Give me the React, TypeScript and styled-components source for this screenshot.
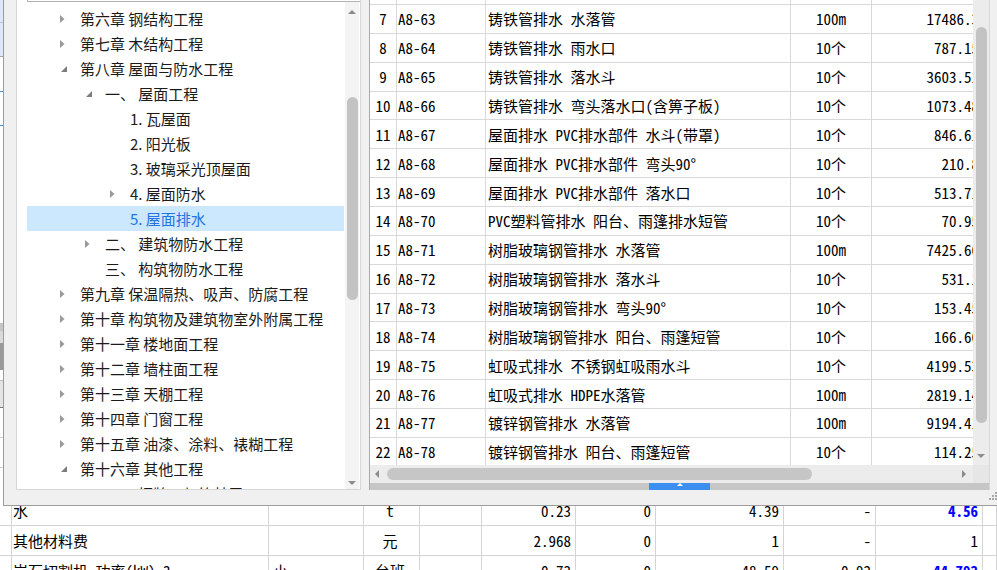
import styled, { createGlobalStyle } from 'styled-components';

const MONO = `"Noto Sans Mono CJK SC", "Noto Sans CJK SC", "Liberation Mono", monospace`;
const SANS = `"Noto Sans CJK SC", "Noto Sans", sans-serif`;

const GlobalStyle = createGlobalStyle`
  *, *::before, *::after { box-sizing: border-box; }
  html, body { margin: 0; padding: 0; background: #fff; }
  body { font-family: ${SANS}; }
`;

const Screen = styled.div`
  position: relative;
  width: 997px;
  height: 570px;
  overflow: hidden;
  background: #fff;
`;

/* ---------- app behind the dialog ---------- */

const Backdrop = styled.div`
  display: flex;
  flex-direction: column;
`;

const UpperArea = styled.div`
  height: 496px;
  display: flex;
  flex-shrink: 0;
`;

const EdgeStrip = styled.div`
  width: 3px;
  display: flex;
  flex-direction: column;
`;

const EdgeBand = styled.div<{ $h: number; $bg: string; $line?: string }>`
  flex-shrink: 0;
  height: ${p => p.$h}px;
  background: ${p => p.$bg};
  border-bottom: ${p => (p.$line ? `1px solid ${p.$line}` : 'none')};
`;

const SheetRow = styled.div`
  display: grid;
  grid-template-columns: 12px 257px 95px 56px 62px 94px 80px 128px 92px 107px 1fr;
  height: 30px;
  flex-shrink: 0;
  border-bottom: 1px solid #d4d4d4;
`;

const SheetCell = styled.div<{ $align?: 'left' | 'center' | 'right'; $blue?: boolean }>`
  display: flex;
  align-items: center;
  justify-content: ${p => (p.$align === 'right' ? 'flex-end' : p.$align === 'center' ? 'center' : 'flex-start')};
  padding: 0 4px 0 1px;
  border-right: 1px solid #d4d4d4;
  font-family: ${MONO};
  font-size: 15px;
  font-weight: ${p => (p.$blue ? 700 : 400)};
  color: ${p => (p.$blue ? '#0000ff' : '#000')};
  white-space: pre;
  overflow: hidden;
`;

/* ---------- dialog ---------- */

const Dialog = styled.div`
  position: absolute;
  left: 3px;
  top: -20px;
  width: 994px;
  height: 526px;
  background: #f0f0f0;
  border: 1px solid #9c9c9c;
  border-right: none;
  padding: 0 7px 15px 12px;
  display: flex;
  gap: 8px;
`;

const Grip = styled.svg`
  position: absolute;
  right: 0;
  bottom: 3px;
`;

/* tree */

const TreePanel = styled.div`
  width: 345px;
  display: flex;
  flex-direction: column;
  background: #fff;
  border: 1px solid #d6d6d6;
  border-top: none;
`;

const SearchEdge = styled.div`
  height: 21px;
  margin-left: 10px;
  flex-shrink: 0;
  border: 1px solid #b3b3b3;
  border-right: none;
  border-top: none;
`;

const TreeBody = styled.div`
  flex: 1;
  min-height: 0;
  display: flex;
  overflow: hidden;
`;

const TreeList = styled.div`
  flex: 1;
  padding: 4px 1px 0 10px;
  overflow: hidden;
`;

const TreeRow = styled.div<{ $level: number; $selected?: boolean }>`
  height: 25px;
  display: flex;
  align-items: center;
  padding-left: ${p => 33 + p.$level * 25}px;
  background: ${p => (p.$selected ? '#cce8ff' : 'transparent')};
  color: ${p => (p.$selected ? '#2473de' : '#1b1b1b')};
  font-size: 15px;
  white-space: pre;
`;

const Toggle = styled.span`
  width: 20px;
  height: 25px;
  flex-shrink: 0;
  display: flex;
  align-items: center;
`;

const TreeScroll = styled.div`
  width: 14px;
  margin-right: 1px;
  background: #f4f4f4;
  display: flex;
  flex-direction: column;
  align-items: center;
`;

const ArrowBox = styled.div<{ $h: number }>`
  height: ${p => p.$h}px;
  flex-shrink: 0;
  display: flex;
  align-items: center;
  justify-content: center;
`;

const Thumb = styled.div<{ $top: number; $len: number }>`
  margin-top: ${p => p.$top}px;
  width: 11px;
  height: ${p => p.$len}px;
  border-radius: 6px;
  background: #c3c3c3;
  flex-shrink: 0;
`;

const Spacer = styled.div`
  flex: 1;
`;

/* table */

const TablePanel = styled.div`
  width: 621px;
  display: flex;
  flex-direction: column;
  border-left: 1px solid #a9a9a9;
  border-right: 1px solid #d8d8d8;
`;

const TableMain = styled.div`
  height: 484px;
  display: flex;
  flex-shrink: 0;
`;

const Viewport = styled.div`
  width: 603px;
  background: #fff;
  overflow: hidden;
  display: flex;
  flex-direction: column;
`;

const GridRow = styled.div<{ $h: number }>`
  display: grid;
  grid-template-columns: 27px 89px 305px 81px 121px;
  height: ${p => p.$h}px;
  flex-shrink: 0;
  border-bottom: 1px solid #d9d9d9;
`;

const GridCell = styled.div<{ $align?: 'left' | 'center' | 'right'; $pad?: string }>`
  display: flex;
  align-items: center;
  justify-content: ${p => (p.$align === 'right' ? 'flex-end' : p.$align === 'center' ? 'center' : 'flex-start')};
  padding: ${p => p.$pad ?? '0 2px'};
  border-right: 1px solid #d9d9d9;
  font-family: ${MONO};
  font-size: 15px;
  color: #000;
  white-space: pre;
  overflow: hidden;
`;

const VScroll = styled.div`
  width: 16px;
  background: #ececec;
  display: flex;
  flex-direction: column;
  align-items: center;
`;

const HScrollRow = styled.div`
  height: 18px;
  display: flex;
  flex-shrink: 0;
`;

const HScroll = styled.div`
  width: 603px;
  background: #ececec;
  display: flex;
  align-items: center;
`;

const HArrow = styled.div<{ $w: number }>`
  width: ${p => p.$w}px;
  height: 18px;
  flex-shrink: 0;
  display: flex;
  align-items: center;
  justify-content: center;
`;

const HThumb = styled.div`
  margin-left: 3px;
  width: 425px;
  height: 12px;
  border-radius: 6px;
  background: #c6c6c6;
`;

const Corner = styled.div`
  flex: 1;
  background: #e6e6e6;
`;

const Splitter = styled.div`
  height: 7px;
  flex-shrink: 0;
  background: #c6c6c6;
  display: flex;
  justify-content: center;
`;

const SplitHandle = styled.div`
  width: 61px;
  background: #3d8fef;
  display: flex;
  align-items: flex-start;
  justify-content: center;
`;

/* ---------- icons ---------- */

const Closed = () => (
  <svg width="5" height="8" viewBox="0 0 5 8">
    <polygon points="0,0 4.5,4 0,8" fill="#9a9a9a" />
  </svg>
);

const Open = () => (
  <svg width="7" height="6" viewBox="0 0 7 6" style={{ marginLeft: 1 }}>
    <polygon points="6,0 6,6 0,6" fill="#7c7c7c" />
  </svg>
);

const Tri = ({ dir, color = '#8c8c8c' }: { dir: 'up' | 'down' | 'left' | 'right'; color?: string }) => {
  const pts = {
    up: '0,4 4,0 8,4',
    down: '0,0 8,0 4,4',
    left: '4,0 4,8 0,4',
    right: '0,0 4,4 0,8',
  }[dir];
  const vertical = dir === 'up' || dir === 'down';
  return (
    <svg width={vertical ? 8 : 4} height={vertical ? 4 : 8} viewBox={vertical ? '0 0 8 4' : '0 0 4 8'}>
      <polygon points={pts} fill={color} />
    </svg>
  );
};

/* ---------- data ---------- */

type TreeItem = { level: number; label: string; state?: 'open' | 'closed'; selected?: boolean };

const treeItems: TreeItem[] = [
  { level: 0, label: '第六章 钢结构工程', state: 'closed' },
  { level: 0, label: '第七章 木结构工程', state: 'closed' },
  { level: 0, label: '第八章 屋面与防水工程', state: 'open' },
  { level: 1, label: '一、 屋面工程', state: 'open' },
  { level: 2, label: '1. 瓦屋面' },
  { level: 2, label: '2. 阳光板' },
  { level: 2, label: '3. 玻璃采光顶屋面' },
  { level: 2, label: '4. 屋面防水', state: 'closed' },
  { level: 2, label: '5. 屋面排水', selected: true },
  { level: 1, label: '二、 建筑物防水工程', state: 'closed' },
  { level: 1, label: '三、 构筑物防水工程' },
  { level: 0, label: '第九章 保温隔热、吸声、防腐工程', state: 'closed' },
  { level: 0, label: '第十章 构筑物及建筑物室外附属工程', state: 'closed' },
  { level: 0, label: '第十一章 楼地面工程', state: 'closed' },
  { level: 0, label: '第十二章 墙柱面工程', state: 'closed' },
  { level: 0, label: '第十三章 天棚工程', state: 'closed' },
  { level: 0, label: '第十四章 门窗工程', state: 'closed' },
  { level: 0, label: '第十五章 油漆、涂料、裱糊工程', state: 'closed' },
  { level: 0, label: '第十六章 其他工程', state: 'open' },
  { level: 1, label: '一、 招牌、灯箱基层' },
];

const quotaRows: [number, string, string, string, string][] = [
  [7, 'A8-63', '铸铁管排水 水落管', '100m', '17486.3'],
  [8, 'A8-64', '铸铁管排水 雨水口', '10个', '787.15'],
  [9, 'A8-65', '铸铁管排水 落水斗', '10个', '3603.51'],
  [10, 'A8-66', '铸铁管排水 弯头落水口(含箅子板)', '10个', '1073.48'],
  [11, 'A8-67', '屋面排水 PVC排水部件 水斗(带罩)', '10个', '846.61'],
  [12, 'A8-68', '屋面排水 PVC排水部件 弯头90°', '10个', '210.8'],
  [13, 'A8-69', '屋面排水 PVC排水部件 落水口', '10个', '513.71'],
  [14, 'A8-70', 'PVC塑料管排水 阳台、雨篷排水短管', '10个', '70.95'],
  [15, 'A8-71', '树脂玻璃钢管排水 水落管', '100m', '7425.66'],
  [16, 'A8-72', '树脂玻璃钢管排水 落水斗', '10个', '531.1'],
  [17, 'A8-73', '树脂玻璃钢管排水 弯头90°', '10个', '153.45'],
  [18, 'A8-74', '树脂玻璃钢管排水 阳台、雨篷短管', '10个', '166.66'],
  [19, 'A8-75', '虹吸式排水 不锈钢虹吸雨水斗', '10个', '4199.53'],
  [20, 'A8-76', '虹吸式排水 HDPE水落管', '100m', '2819.14'],
  [21, 'A8-77', '镀锌钢管排水 水落管', '100m', '9194.41'],
  [22, 'A8-78', '镀锌钢管排水 阳台、雨篷短管', '10个', '114.25'],
];

type SheetLine = { name: string; spec: string; unit: string; a: string; b: string; c: string; d: string; total: string; blue: boolean };

const sheetRows: SheetLine[] = [
  { name: '水', spec: '', unit: 't', a: '0.23', b: '0', c: '4.39', d: '-', total: '4.56', blue: true },
  { name: '其他材料费', spec: '', unit: '元', a: '2.968', b: '0', c: '1', d: '-', total: '1', blue: false },
  { name: '岩石切割机 功率(kW) 3', spec: '小', unit: '台班', a: '0.73', b: '0', c: '48.59', d: '0.92', total: '44.793', blue: true },
];

const edgeBands: { h: number; bg: string; line?: string }[] = [
  { h: 23, bg: '#dde9f8', line: '#b7c6d9' },
  { h: 34, bg: '#dde9f8', line: '#a3a3a3' },
  { h: 35, bg: '#fff', line: '#4a8fe0' },
  { h: 34, bg: '#fff', line: '#4a8fe0' },
  { h: 197, bg: '#fff' },
  { h: 8, bg: '#c6c6c6' },
  { h: 12, bg: '#dadada' },
  { h: 27, bg: '#9a9a9a' },
  { h: 11, bg: '#fff', line: '#bdbdbd' },
  { h: 27, bg: '#e4e4e4', line: '#777' },
  { h: 30, bg: '#fff', line: '#cfcfcf' },
  { h: 30, bg: '#fff', line: '#cfcfcf' },
  { h: 40, bg: '#fff' },
];

export default function App() {
  return (
    <Screen>
      <GlobalStyle />
      <Backdrop>
        <UpperArea>
          <EdgeStrip>
            {edgeBands.map((b, i) => (
              <EdgeBand key={i} $h={b.h} $bg={b.bg} $line={b.line} />
            ))}
          </EdgeStrip>
        </UpperArea>
        {sheetRows.map(r => (
          <SheetRow key={r.name}>
            <SheetCell />
            <SheetCell>{r.name}</SheetCell>
            <SheetCell $align="left" style={{ paddingLeft: 4 }}>{r.spec}</SheetCell>
            <SheetCell $align="center">{r.unit}</SheetCell>
            <SheetCell />
            <SheetCell $align="right">{r.a}</SheetCell>
            <SheetCell $align="right">{r.b}</SheetCell>
            <SheetCell $align="right">{r.c}</SheetCell>
            <SheetCell $align="right">{r.d}</SheetCell>
            <SheetCell $align="right" $blue={r.blue}>{r.total}</SheetCell>
            <SheetCell />
          </SheetRow>
        ))}
      </Backdrop>

      <Dialog>
        <TreePanel>
          <SearchEdge />
          <TreeBody>
            <TreeList>
              {treeItems.map(item => (
                <TreeRow key={item.label} $level={item.level} $selected={item.selected}>
                  <Toggle>
                    {item.state === 'closed' && <Closed />}
                    {item.state === 'open' && <Open />}
                  </Toggle>
                  {item.label}
                </TreeRow>
              ))}
            </TreeList>
            <TreeScroll>
              <ArrowBox $h={20}>
                <Tri dir="up" />
              </ArrowBox>
              <Thumb $top={75} $len={203} />
              <Spacer />
              <ArrowBox $h={12}>
                <Tri dir="down" />
              </ArrowBox>
            </TreeScroll>
          </TreeBody>
        </TreePanel>

        <TablePanel>
          <TableMain>
            <Viewport>
              <GridRow $h={24}>
                <GridCell />
                <GridCell />
                <GridCell />
                <GridCell />
                <GridCell />
              </GridRow>
              {quotaRows.map(([no, code, name, unit, price]) => (
                <GridRow key={no} $h={28.87}>
                  <GridCell $align="center" $pad="0">{no}</GridCell>
                  <GridCell $pad="0 0 0 1px">{code}</GridCell>
                  <GridCell $pad="0 0 0 2px">{name}</GridCell>
                  <GridCell $align="center" $pad="0">{unit}</GridCell>
                  <GridCell $align="right" $pad="0 13px 0 0">{price}</GridCell>
                </GridRow>
              ))}
            </Viewport>
            <VScroll>
              <Thumb $top={46} $len={396} />
              <Spacer />
              <ArrowBox $h={18}>
                <Tri dir="down" />
              </ArrowBox>
            </VScroll>
          </TableMain>
          <HScrollRow>
            <HScroll>
              <HArrow $w={14}>
                <Tri dir="left" />
              </HArrow>
              <HThumb />
              <Spacer />
              <HArrow $w={18}>
                <Tri dir="right" />
              </HArrow>
            </HScroll>
            <Corner />
          </HScrollRow>
          <Splitter>
            <SplitHandle>
              <svg width="6" height="3" viewBox="0 0 6 3">
                <polygon points="0,3 3,0 6,3" fill="#fff" />
              </svg>
            </SplitHandle>
          </Splitter>
        </TablePanel>

        <Grip width="10" height="10" viewBox="0 0 10 10">
          {[
            [8, 0],
            [8, 3],
            [5, 3],
            [8, 6],
            [5, 6],
            [2, 6],
          ].map(([x, y]) => (
            <rect key={`${x}-${y}`} x={x} y={y} width="2" height="2" fill="#a8a8a8" />
          ))}
        </Grip>
      </Dialog>
    </Screen>
  );
}
